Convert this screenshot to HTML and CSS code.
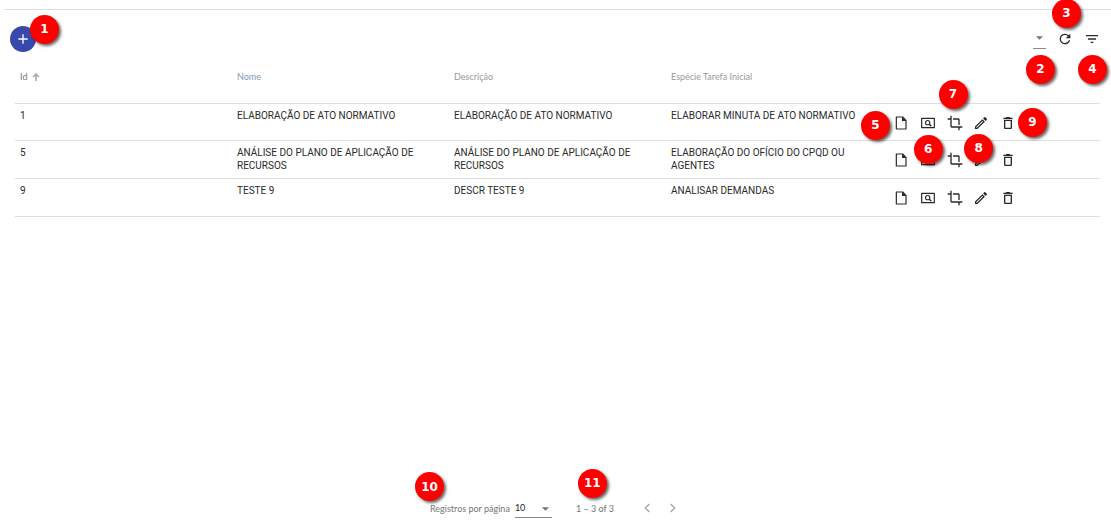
FILE: index.html
```html
<!DOCTYPE html>
<html lang="pt-BR">
<head>
<meta charset="utf-8">
<title>Tarefas</title>
<link rel="stylesheet" href="styles.css">
</head>
<body>
<svg class="sprite" aria-hidden="true">
  <symbol id="i-file" viewBox="0 0 24 24"><path d="M5 3h9.500l5 5V21H5z" fill="none" stroke="currentColor" stroke-width="1.800" stroke-linejoin="round"/><path d="M13.500 2.500V9H20z" fill="currentColor"/></symbol>
  <symbol id="i-preview" viewBox="0 0 24 24"><path d="M2.500 5h19v14h-19z" fill="none" stroke="currentColor" stroke-width="1.800" stroke-linejoin="round"/><circle cx="11.500" cy="11.500" r="3.200" fill="none" stroke="currentColor" stroke-width="1.700"/><path d="M14 14l3 3" stroke="currentColor" stroke-width="2"/></symbol>
  <symbol id="i-crop" viewBox="0 0 24 24"><path d="M17 15h2V7c0-1.100-.9-2-2-2H9v2h8v8zM7 17V1H5v4H1v2h4v10c0 1.100.9 2 2 2h10v4h2v-4h4v-2H7z" fill="currentColor"/></symbol>
  <symbol id="i-edit" viewBox="0 0 24 24"><path d="M14.060 9.020l.92.92L5.920 19H5v-.92l9.060-9.060M17.660 3c-.25 0-.51.1-.7.290l-1.830 1.830 3.750 3.750 1.830-1.830c.39-.39.39-1.020 0-1.410l-2.340-2.340c-.2-.2-.45-.29-.71-.29zm-3.600 3.190L3 17.250V21h3.750L17.810 9.940l-3.750-3.750z" fill="currentColor"/></symbol>
  <symbol id="i-trash" viewBox="0 0 24 24"><path d="M6 19c0 1.100.9 2 2 2h8c1.100 0 2-.9 2-2V7H6v12zM8 9h8v10H8V9zm7.500-5l-1-1h-5l-1 1H5v2h14V4z" fill="currentColor"/></symbol>
  <symbol id="i-refresh" viewBox="0 0 24 24"><path d="M17.650 6.350A7.958 7.958 0 0 0 12 4a8 8 0 1 0 7.730 10h-2.080A6 6 0 1 1 12 6c1.660 0 3.140.69 4.220 1.780L13 11h7V4l-2.350 2.350z" fill="currentColor"/></symbol>
  <symbol id="i-filter" viewBox="0 0 24 24"><path d="M10 18h4v-2h-4v2zM3 6v2h18V6H3zm3 7h12v-2H6v2z" fill="currentColor"/></symbol>
  <symbol id="i-plus" viewBox="0 0 24 24"><path d="M19 13h-6v6h-2v-6H5v-2h6V5h2v6h6v2z" fill="currentColor"/></symbol>
  <symbol id="i-prev" viewBox="0 0 24 24"><path d="M15.500 6l-6 6 6 6" fill="none" stroke="currentColor" stroke-width="2.200"/></symbol>
  <symbol id="i-next" viewBox="0 0 24 24"><path d="M8.500 6l6 6-6 6" fill="none" stroke="currentColor" stroke-width="2.200"/></symbol>
  <symbol id="i-up" viewBox="0 0 8 8"><path d="M4 8V1M1 4l3-3 3 3" fill="none" stroke="currentColor" stroke-width="1.600"/></symbol>
</svg>
<main class="page">
  <header class="toolbar">
    <div class="anchor">
      <button class="add" aria-label="Adicionar"><svg class="icon"><use href="#i-plus"/></svg></button>
      <span class="badge b1">1</span>
    </div>
    <div class="tools">
      <div class="anchor">
        <select class="columns" aria-label="Colunas"><option></option></select>
        <span class="badge b2">2</span>
      </div>
      <div class="anchor">
        <button class="tool" aria-label="Atualizar"><svg class="icon"><use href="#i-refresh"/></svg></button>
        <span class="badge b3">3</span>
      </div>
      <div class="anchor">
        <button class="tool" aria-label="Filtrar"><svg class="icon"><use href="#i-filter"/></svg></button>
        <span class="badge b4">4</span>
      </div>
    </div>
  </header>

  <table class="grid">
    <thead>
      <tr>
        <th class="sorted">Id <svg class="arrow"><use href="#i-up"/></svg></th>
        <th class="active">Nome</th>
        <th>Descrição</th>
        <th>Espécie Tarefa Inicial</th>
        <th></th>
      </tr>
    </thead>
    <tbody>
      <tr>
        <td>1</td>
        <td>ELABORAÇÃO DE ATO NORMATIVO</td>
        <td>ELABORAÇÃO DE ATO NORMATIVO</td>
        <td>ELABORAR MINUTA DE ATO NORMATIVO</td>
        <td><div class="actions">
          <div class="anchor"><button class="tool" aria-label="Documento"><svg class="icon"><use href="#i-file"/></svg></button><span class="badge b5">5</span></div>
          <div class="anchor"><button class="tool" aria-label="Visualizar"><svg class="icon"><use href="#i-preview"/></svg></button><span class="badge b6">6</span></div>
          <div class="anchor"><button class="tool" aria-label="Transições"><svg class="icon"><use href="#i-crop"/></svg></button><span class="badge b7">7</span></div>
          <div class="anchor"><button class="tool" aria-label="Editar"><svg class="icon"><use href="#i-edit"/></svg></button><span class="badge b8">8</span></div>
          <div class="anchor"><button class="tool" aria-label="Excluir"><svg class="icon"><use href="#i-trash"/></svg></button><span class="badge b9">9</span></div>
        </div></td>
      </tr>
      <tr>
        <td>5</td>
        <td>ANÁLISE DO PLANO DE APLICAÇÃO DE RECURSOS</td>
        <td>ANÁLISE DO PLANO DE APLICAÇÃO DE RECURSOS</td>
        <td>ELABORAÇÃO DO OFÍCIO DO CPQD OU AGENTES</td>
        <td><div class="actions">
          <button class="tool" aria-label="Documento"><svg class="icon"><use href="#i-file"/></svg></button>
          <button class="tool" aria-label="Visualizar"><svg class="icon"><use href="#i-preview"/></svg></button>
          <button class="tool" aria-label="Transições"><svg class="icon"><use href="#i-crop"/></svg></button>
          <button class="tool" aria-label="Editar"><svg class="icon"><use href="#i-edit"/></svg></button>
          <button class="tool" aria-label="Excluir"><svg class="icon"><use href="#i-trash"/></svg></button>
        </div></td>
      </tr>
      <tr>
        <td>9</td>
        <td>TESTE 9</td>
        <td>DESCR TESTE 9</td>
        <td>ANALISAR DEMANDAS</td>
        <td><div class="actions">
          <button class="tool" aria-label="Documento"><svg class="icon"><use href="#i-file"/></svg></button>
          <button class="tool" aria-label="Visualizar"><svg class="icon"><use href="#i-preview"/></svg></button>
          <button class="tool" aria-label="Transições"><svg class="icon"><use href="#i-crop"/></svg></button>
          <button class="tool" aria-label="Editar"><svg class="icon"><use href="#i-edit"/></svg></button>
          <button class="tool" aria-label="Excluir"><svg class="icon"><use href="#i-trash"/></svg></button>
        </div></td>
      </tr>
    </tbody>
  </table>

  <footer class="pager">
    <div class="anchor size">
      <label for="size">Registros por página</label>
      <select id="size" class="size-select"><option>10</option></select>
      <span class="badge b10">10</span>
    </div>
    <div class="anchor range"><span>1 – 3 of 3</span><span class="badge b11">11</span></div>
    <div class="nav">
      <button class="tool nav-btn" aria-label="Página anterior"><svg class="icon"><use href="#i-prev"/></svg></button>
      <button class="tool nav-btn" aria-label="Próxima página"><svg class="icon"><use href="#i-next"/></svg></button>
    </div>
  </footer>
</main>
</body>
</html>
```
FILE: styles.css
```css
* { box-sizing: border-box; }
body {
  margin: 0;
  background: #fff;
  color: #2a2a2a;
  font-family: Roboto, "Open Sans", sans-serif;
  font-size: 10px;
  line-height: 13px;
}
.sprite { position: absolute; width: 0; height: 0; }
.page {
  display: flex;
  flex-direction: column;
  min-height: 100vh;
  padding-top: 9px;
}
button { border: 0; padding: 0; background: none; color: inherit; cursor: pointer; }
select {
  appearance: none;
  margin: 0;
  padding: 0;
  border: 0;
  border-bottom: 1px solid #8c8c8c;
  border-radius: 0;
  font: inherit;
  color: #222;
  background: url("data:image/svg+xml,%3Csvg xmlns='http://www.w3.org/2000/svg' viewBox='0 0 8 4'%3E%3Cpath d='M0 0h8L4 4z' fill='%23757575'/%3E%3C/svg%3E") no-repeat center 7px / 7px 4px;
}
.icon { display: block; width: 16px; height: 16px; }
.anchor { position: relative; display: flex; align-items: center; }
.tool { display: block; width: 16px; height: 16px; }

.toolbar {
  display: flex;
  justify-content: space-between;
  align-items: center;
  height: 48px;
  margin-left: 4px;
  padding: 10px 11px 0 6px;
  border-top: 1px solid #dedede;
}
.add {
  display: flex;
  align-items: center;
  justify-content: center;
  width: 26px;
  height: 26px;
  border-radius: 50%;
  background: #3949ab;
  color: #fff;
}
.tools { display: flex; align-items: center; gap: 11px; }
.columns { width: 13px; height: 20px; }

.grid {
  table-layout: fixed;
  border-collapse: collapse;
  margin: 0 11px 0 15px;
}
.grid th, .grid td {
  padding: 5px 5px 0;
  border-bottom: 1px solid #dedede;
  vertical-align: top;
  text-align: left;
  width: 20%;
}
.grid th {
  height: 46px;
  padding-top: 13px;
  font-family: Lato, sans-serif;
  font-size: 9px;
  font-weight: 400;
  color: #999;
}
.grid td { height: 38px; }
.grid tbody tr:first-child td { height: 37px; }
.grid .active { color: #7d97b3; }
.grid .sorted { color: #777; }
.arrow { width: 8px; height: 8px; margin-left: 2px; color: #aaa; vertical-align: -1px; }
.actions {
  display: flex;
  justify-content: space-between;
  width: 123px;
  margin-left: 5px;
  padding-top: 6px;
}

.pager {
  display: flex;
  justify-content: center;
  align-items: center;
  height: 36px;
  margin-top: auto;
  font-family: Lato, sans-serif;
  font-size: 9px;
  color: #757575;
}
.size { gap: 5px; }
.size-select { width: 37px; height: 20px; background-position: right 3px top 9px; }
.range { margin: 0 25px 0 24px; }
.nav { display: flex; gap: 10px; }
.nav-btn { color: #aaa; }

.badge {
  position: absolute;
  z-index: 1;
  display: flex;
  align-items: center;
  justify-content: center;
  width: 29px;
  height: 29px;
  border-radius: 50%;
  background: #f00;
  color: #fff;
  font: 700 12px/14px "DejaVu Sans", sans-serif;
  box-shadow: 2px 2px 3px rgba(0, 0, 0, 0.6);
}
.b1 { left: 20px; top: -11px; }
.b2 { left: -7px; top: 26px; }
.b3 { left: -5px; top: -32px; }
.b4 { left: -6px; top: 24px; }
.b5 { left: -32px; top: -4px; }
.b6 { left: -6px; top: 20px; }
.b7 { left: -8px; top: -35px; }
.b8 { left: -9px; top: 19px; }
.b9 { left: 18px; top: -7px; }
.b10 { left: -15px; top: -26px; }
.b11 { left: 2px; top: -33px; }
```
